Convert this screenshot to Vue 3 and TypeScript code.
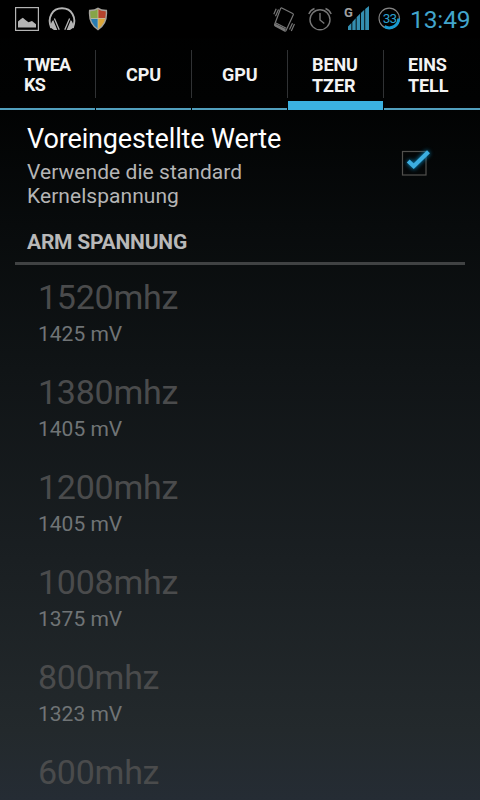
<script setup lang="ts">
interface Tab {
  lines: string[]
  active?: boolean
  tight?: boolean
}
interface Voltage {
  freq: string
  value?: string
}

const tabs: Tab[] = [
  { lines: ['TWEA', 'KS'], tight: true },
  { lines: ['CPU'] },
  { lines: ['GPU'] },
  { lines: ['BENU', 'TZER'], active: true },
  { lines: ['EINS', 'TELL'] },
]

const voltages: Voltage[] = [
  { freq: '1520mhz', value: '1425 mV' },
  { freq: '1380mhz', value: '1405 mV' },
  { freq: '1200mhz', value: '1405 mV' },
  { freq: '1008mhz', value: '1375 mV' },
  { freq: '800mhz', value: '1323 mV' },
  { freq: '600mhz' },
]
</script>

<template>
  <div class="screen">
    <header class="status">
      <div class="notifications">
        <svg class="picture" width="24" height="24" viewBox="0 0 24 24">
          <rect x=".6" y=".6" width="22.8" height="22.8" fill="none" stroke="#b4b4b4" stroke-width="1.2" />
          <path d="M3 20.500V14.500l2.600-2.200 2.200-1.500 3 2.500 2.700 2 3.500-1.200 4 3.200v3.200z" fill="#b4b4b4" />
        </svg>
        <svg class="headphones" width="28" height="24" viewBox="0 0 28 24">
          <path d="M3.200 21C-1.200 10.500 4.500 1.300 14 1.300S29.200 10.500 24.800 21" fill="none" stroke="#b4b4b4" stroke-width="1.900" />
          <path d="M6.400 11.500 11.200 22.800M21.600 11.500 16.800 22.800" stroke="#b4b4b4" stroke-width="1.300" />
          <path d="M5.200 13 9.300 23H6L2.400 20.500Q2.300 16 5.200 13zM22.800 13 18.700 23H22l3.600-2.500Q25.700 16 22.800 13z" fill="#b4b4b4" />
        </svg>
        <svg class="shield" width="20" height="24" viewBox="0 0 20 24">
          <defs>
            <clipPath id="shield-shape"><path d="M10 2.300Q13 4.300 17.700 4.200 18.500 16.500 10 21.700 1.500 16.500 2.300 4.200 7 4.300 10 2.300z" /></clipPath>
          </defs>
          <path d="M10 .5Q13.500 3 19 2.800 20.500 17.500 10 23.500-.5 17.500 1 2.800 6.500 3 10 .5z" fill="#a5a39d" />
          <g clip-path="url(#shield-shape)">
            <path d="M0 0h10v11.500H0z" fill="#86a448" />
            <path d="M10 0h10v11.500H10z" fill="#b5432c" />
            <path d="M0 11.500h10V24H0z" fill="#287cb2" />
            <path d="M10 11.500h10V24H10z" fill="#dba63a" />
            <path d="M10 0v24M0 11.500h20" stroke="#d0c8a6" stroke-width=".7" />
          </g>
        </svg>
      </div>
      <div class="system">
        <svg class="vibrate" width="22" height="25" viewBox="0 0 22 25">
          <g fill="none" stroke="#777" stroke-width="1.200">
            <path d="M8.800 1 19.700 6.400Q20.600 7 20.200 8L13.200 23.200Q12.600 24.400 11.500 23.900L2.200 18.900Q1.300 18.400 1.700 17.300L7.500 1.700Q8 .600 8.800 1z" />
            <path d="M2.800 16 13.300 21.300M.8 7.200 3.200 1.800M2.500 9.300 5.500 2.500M19.500 16.200 16.500 22.500M21.500 17 18.300 24" />
          </g>
          <path d="m2 16.500 11 5.500-1.200 2-9.800-5.200z" fill="#777" />
        </svg>
        <svg class="alarm" width="24" height="24" viewBox="0 0 24 24">
          <g fill="none" stroke="#777" stroke-width="1.400">
            <circle cx="12" cy="12.800" r="10" />
            <path d="M12 6v7l4.300 3.500M.8 7Q2.500 3 6.500 1.500M23.200 7Q21.500 3 17.500 1.500" />
          </g>
        </svg>
        <div class="signal">
          <span class="network">G</span>
          <svg width="21" height="24" viewBox="0 0 21 24">
            <path d="M0 24V20.500L3.400 17V24zM4.300 24V16L7.700 12.200V24zM8.600 24V11.300L12 7.800V24zM12.900 24V7L16.300 3.700V24zM17.200 24V2.900L21 0V24z" fill="#348eb0" />
          </svg>
        </div>
        <div class="battery">
          <svg width="23" height="23" viewBox="0 0 23 23">
            <circle cx="11.200" cy="11.300" r="10.200" fill="none" stroke="#858585" stroke-width="1.100" />
            <path d="M20.700 11.500A9.500 9.500 0 0 1 6.500 19.600" fill="none" stroke="#1799d2" stroke-width="2.900" />
          </svg>
          <span class="level">33</span>
        </div>
        <span class="clock">13:49</span>
      </div>
    </header>

    <nav class="tabs">
      <div
        v-for="tab in tabs"
        :key="tab.lines[0]"
        class="tab"
        :class="{ active: tab.active, tight: tab.tight, single: tab.lines.length === 1 }"
      >
        <div v-for="line in tab.lines" :key="line">{{ line }}</div>
      </div>
    </nav>

    <main>
      <section class="preference">
        <div>
          <div class="title">Voreingestellte Werte</div>
          <div class="summary">Verwende die standard<br />Kernelspannung</div>
        </div>
        <svg class="checkbox" width="36" height="36" viewBox="0 0 36 36">
          <rect x="6.500" y="8.500" width="23.500" height="23.500" fill="none" stroke="#51504d" stroke-width="1.200" />
          <path class="glow" d="m12.200 18 5.500 5.200L32.500 8.700" />
          <path class="tick" d="m12.200 18 5.500 5.200L32.500 8.700" />
        </svg>
      </section>

      <h2 class="section-title">ARM SPANNUNG</h2>

      <section class="voltages">
        <div v-for="item in voltages" :key="item.freq" class="voltage">
          <div class="freq">{{ item.freq }}</div>
          <div v-if="item.value" class="value">{{ item.value }}</div>
        </div>
      </section>
    </main>
  </div>
</template>

<style>
body {
  background: #000;
}
</style>

<style scoped>
.screen {
  width: 480px;
  height: 800px;
  overflow: hidden;
  background: linear-gradient(#000 0, #010202 100px, #080b0c 225px, #101416 370px, #1a1f22 560px, #23292c 730px, #252c34 800px);
  font-family: Roboto, sans-serif;
  color: #fff;
}
.status {
  display: flex;
  justify-content: space-between;
  height: 38px;
  background: #000;
}
.notifications {
  display: flex;
  padding: 7px 0 0 15px;
}
.headphones {
  margin-left: 9px;
}
.shield {
  margin-left: 12px;
}
.system {
  display: flex;
  padding: 7px 0 0;
}
.alarm {
  margin-left: 13px;
}
.vibrate,
.alarm,
.shield,
.headphones,
.picture {
  flex: none;
}
.signal {
  display: flex;
  margin-left: 12px;
}
.signal svg {
  margin: -1px 0 0 -6px;
}
.network {
  width: 10px;
  font-size: 13px;
  line-height: 12px;
  font-weight: 700;
  color: #a0a0a0;
}
.battery {
  display: grid;
  margin-left: 9px;
  width: 23px;
  height: 23px;
}
.battery > * {
  grid-area: 1 / 1;
}
.level {
  font-size: 13.5px;
  line-height: 23px;
  letter-spacing: -0.8px;
  text-align: center;
  color: #2c9fcc;
}
.clock {
  width: 70px;
  margin-left: 9px;
  font-size: 24.5px;
  line-height: 26px;
  letter-spacing: -0.1px;
  color: #42a5cc;
}
.tabs {
  display: grid;
  grid-template-columns: repeat(5, 96px);
  height: 72px;
}
.tab {
  display: flex;
  flex-direction: column;
  justify-content: center;
  padding: 2px 0 0 24px;
  font-size: 18px;
  line-height: 21px;
  font-weight: 700;
  letter-spacing: -0.1px;
  color: #f3f3f3;
  background:
    linear-gradient(#303234, #303234) 95px 12px / 1px 48px no-repeat,
    linear-gradient(#519fbd, #519fbd) 0 70px / 95px 2px no-repeat;
}
.tab:last-child {
  background: linear-gradient(#519fbd, #519fbd) 0 70px / 96px 2px no-repeat;
}
.tab.active {
  background:
    linear-gradient(#303234, #303234) 95px 12px / 1px 48px no-repeat,
    linear-gradient(#3bb1e0, #3bb1e0) 0 63px / 95px 9px no-repeat;
}
.tab.single {
  padding: 0 0 0 30px;
}
.tab.tight {
  padding-left: 24px;
  line-height: 20px;
  letter-spacing: -0.7px;
}
.preference {
  display: flex;
  justify-content: space-between;
  padding: 13px 48px 0 27px;
}
.title {
  font-size: 27px;
  line-height: 32px;
  letter-spacing: -0.14px;
  white-space: nowrap;
}
.summary {
  margin-top: 5px;
  font-size: 21px;
  line-height: 24px;
  letter-spacing: 0.05px;
  color: #b5b5b5;
}
.checkbox {
  margin-top: 20px;
  overflow: visible;
}
.tick,
.glow {
  fill: none;
  stroke: #3caee0;
  stroke-width: 4.2;
}
.glow {
  stroke: #087caf;
  stroke-width: 5;
  filter: blur(2px);
}
.section-title {
  margin: 22px 15px 0;
  padding: 0 12px 8px;
  border-bottom: 3px solid #404243;
  font-size: 21px;
  line-height: 24px;
  font-weight: 700;
  letter-spacing: -0.22px;
  color: #b8b8b8;
}
.voltages {
  padding: 12px 38px 0;
}
.voltage {
  height: 95px;
}
.freq {
  font-size: 34px;
  line-height: 40px;
  letter-spacing: -0.25px;
  color: #4a4b4c;
}
.value {
  margin-top: 5px;
  font-size: 21px;
  line-height: 24px;
  color: #707476;
}
</style>
